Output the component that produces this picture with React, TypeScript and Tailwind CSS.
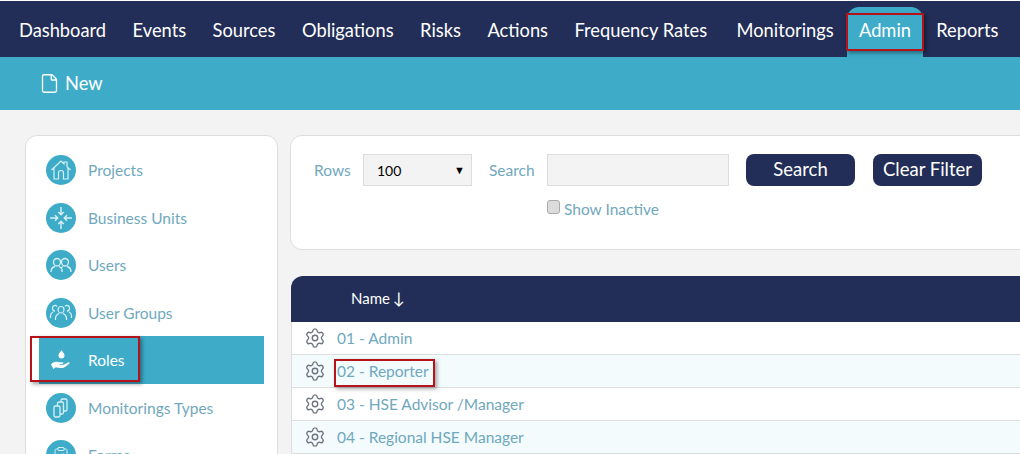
import { File, Settings, ClipboardList } from 'lucide-react';

const navItems = ['Dashboard', 'Events', 'Sources', 'Obligations', 'Risks', 'Actions', 'Frequency Rates', 'Monitorings', 'Admin', 'Reports'];

function HomeIcon() {
  return (
    <svg width="22" height="22" viewBox="0 0 22 22" fill="none" stroke="currentColor" strokeWidth="1.2">
      <path d="M1.500 11 11 2l3 2.800V3h3v4.600L20.500 11M4 9v11h4.500v-6a2.500 2.500 0 0 1 5 0v6H18V9" />
    </svg>
  );
}

function UnitsIcon() {
  return (
    <svg width="24" height="24" viewBox="0 0 22 22" fill="none" stroke="currentColor" strokeWidth="1.3">
      <path d="M11 1v7M8.500 5.500 11 8l2.500-2.500M11 21v-7M8.500 16.500 11 14l2.500 2.500M1 11h7M5.500 8.500 8 11l-2.500 2.500M21 11h-7M16.500 8.500 14 11l2.500 2.500" />
    </svg>
  );
}

function UsersIcon() {
  return (
    <svg width="22" height="22" viewBox="0 0 22 22" fill="none" stroke="currentColor" strokeWidth="1.3">
      <path d="M3.500 8a3.500 3.500 0 0 1 7 0c0 2-1.500 4-3.500 4S3.500 10 3.500 8zM1 18c0-3 2-5 4-5.500M9 12.500c1.500.5 2.500 1.500 3 3v2.500" />
      <path d="M11.500 8a3.500 3.500 0 0 1 7 0c0 2-1.500 4-3.500 4s-3.500-2-3.500-4zM13 12.500c-1 .3-1.500.8-2 1.500M17 12.500c2 .5 4 2.500 4 5.500" />
    </svg>
  );
}

function GroupIcon() {
  return (
    <svg width="24" height="24" viewBox="0 0 24 24" fill="none" stroke="currentColor" strokeWidth="1.2">
      <path d="M9 8.500a3 3 0 0 1 6 0c0 1.800-1.300 3.500-3 3.500s-3-1.700-3-3.500zM6.500 19v-2c0-2 1.500-3.500 3.500-4.500M17.500 19v-2c0-2-1.500-3.500-3.500-4.500" />
      <path d="M8 5.500A2.500 2.500 0 0 0 3.500 7c0 1.500 1 3 2.500 3.200M4 11c-1.500.7-2.500 2-2.500 3.800V17M16 5.500A2.500 2.500 0 0 1 20.500 7c0 1.500-1 3-2.500 3.200M20 11c1.500.7 2.500 2 2.500 3.800V17" />
    </svg>
  );
}

function RolesIcon() {
  return (
    <svg width="22" height="22" viewBox="0 0 22 22" fill="currentColor">
      <path d="M11.500 1c1.600 2.400 3 3.800 3 5.500a3 3 0 0 1-6 0C8.500 4.800 10 3.400 11.500 1z" />
      <path d="M1 15.500c1.500-2 3.500-3 5.500-2.800l3 .6h3c1 0 1.200 1.500 0 1.700l-3 .3.200.6 3.800-.2 5-2.500c1-.3 1.500.8.700 1.500-2 1.800-4 3.500-6.500 4.200-2.500.6-5-.3-7-.7L3.500 20z" />
    </svg>
  );
}

function TypesIcon() {
  return (
    <svg width="22" height="22" viewBox="0 0 22 22" fill="none" stroke="currentColor" strokeWidth="1.3" strokeLinejoin="round">
      <rect x="4" y="9" width="6" height="11" rx="1.500" />
      <path d="M7.500 9V6.500A1.500 1.500 0 0 1 9 5h3a1.500 1.500 0 0 1 1.500 1.500v9a1.500 1.500 0 0 1-1.500 1.500h-2" />
      <path d="M11 5V3.500A1.500 1.500 0 0 1 12.500 2h3A1.500 1.500 0 0 1 17 3.500v9a1.500 1.500 0 0 1-1.500 1.500h-2" />
    </svg>
  );
}

const sideItems = [
  { label: 'Projects', icon: <HomeIcon /> },
  { label: 'Business Units', icon: <UnitsIcon /> },
  { label: 'Users', icon: <UsersIcon /> },
  { label: 'User Groups', icon: <GroupIcon /> },
  { label: 'Roles', icon: <RolesIcon />, active: true },
  { label: 'Monitorings Types', icon: <TypesIcon /> },
  { label: 'Forms', icon: <ClipboardList size={18} strokeWidth={1.3} /> },
];

const rows = ['01 - Admin', '02 - Reporter', '03 - HSE Advisor /Manager', '04 - Regional HSE Manager'];

export default function App() {
  return (
    <div className="relative w-[1020px] h-[454px] overflow-hidden bg-[#f4f3f4] font-['Lato',sans-serif]">
      <div className="h-px bg-white" />
      <nav className="h-[56px] bg-[#222e57] flex items-end pl-[5.750px] whitespace-nowrap text-[18.300px] text-white">
        {navItems.map((item) =>
          item === 'Admin' ? (
            <div key={item} className="relative h-[50px] w-[76px] flex items-center justify-center rounded-t-xl bg-[#3eacc9] pb-[2px]">
              {item}
              <div className="absolute left-[-1px] right-[-1px] top-[6px] h-[38px] border-2 border-[#b5121b] shadow-[2px_2px_4px_rgba(0,0,0,0.4)]" />
            </div>
          ) : (
            <a key={item} className={`h-[56px] px-[13.250px] flex items-center pt-[4px] ${item === 'Frequency Rates' ? 'mr-[3px]' : ''}`}>
              {item}
            </a>
          )
        )}
      </nav>
      <div className="h-[53px] bg-[#3eacc9] flex items-center pl-[39px] gap-[5px] text-white text-[18.300px]">
        <File size={21} strokeWidth={1.5} />
        New
      </div>

      <div className="flex gap-3 pl-[25px] pt-[25px]">
        <aside className="w-[253px] h-[400px] shrink-0 bg-white border border-[#ddd] rounded-xl pt-[10px] px-[13px]">
          {sideItems.map((item, i) => (
            <div key={item.label} className={`relative flex items-center gap-[12px] pl-[7px] text-[15.500px] ${i % 2 ? 'h-[47px]' : 'h-[48px]'} ${item.active ? 'bg-[#3eacc9] text-white' : 'text-[#6fa8bd]'}`}>
              <span className={`w-[30px] h-[30px] rounded-full flex items-center justify-center ${item.active ? 'text-white' : 'bg-[#3eacc9] text-[#d8f1f7]'}`}>
                {item.icon}
              </span>
              <span className="pt-[2px]">{item.label}</span>
              {item.active && (
                <div className="absolute left-[-9px] top-0 w-[110px] h-[46px] border-2 border-[#b5121b] shadow-[2px_2px_4px_rgba(0,0,0,0.4)]" />
              )}
            </div>
          ))}
        </aside>

        <div className="w-[760px] shrink-0">
          <div className="h-[115px] bg-white border border-[#ddd] rounded-xl pl-[23px] pt-[18px] text-[15.500px] text-[#6fa8bd]">
            <div className="flex items-center h-[32px]">
              <span className="w-[49px] pt-[2px]">Rows</span>
              <div className="w-[109px] h-[32px] bg-[#f4f3f4] border border-[#ddd] flex items-center justify-between pl-[13px] pr-[6px] text-black text-[14px]">
                100
                <span className="text-[11px]">▼</span>
              </div>
              <span className="ml-[17px] w-[58px] pt-[2px]">Search</span>
              <div className="w-[182px] h-[32px] bg-[#f4f3f4] border border-[#ddd]" />
              <button className="ml-[17px] w-[109px] h-[32px] rounded-lg bg-[#222e57] text-white text-[18.500px]">Search</button>
              <button className="ml-[18px] w-[109px] h-[32px] rounded-lg bg-[#222e57] text-white text-[18.500px]">Clear Filter</button>
            </div>
            <div className="flex items-center gap-[4px] ml-[233px] mt-[12px]">
              <span className="w-[13px] h-[14px] rounded-[3px] bg-[#dcdcdc] border border-[#aaa] mb-[5px]" />
              Show Inactive
            </div>
          </div>

          <div className="mt-[26px] ml-px">
            <div className="h-[46px] bg-[#222e57] rounded-t-xl flex items-center pl-[60px] pb-[2px] gap-[3px] text-white text-[15px]">
              Name <span className="text-[16px] leading-none">↓</span>
            </div>
            {rows.map((row, i) => (
              <div key={row} className={`h-[33px] flex items-center pl-[12px] gap-[11px] border-b border-l border-[#ddd] text-[15.500px] text-[#6fa8bd] ${i % 2 ? 'bg-[#f3fbfd]' : 'bg-white'}`}>
                <Settings size={22} strokeWidth={1.5} className="text-[#6b7280]" />
                <span className="relative pt-[2px]">
                  {row}
                  {i === 1 && (
                    <span className="absolute left-[-3px] right-[-6px] top-[1px] bottom-[-3px] border-2 border-[#b5121b] shadow-[2px_2px_4px_rgba(0,0,0,0.35)]" />
                  )}
                </span>
              </div>
            ))}
          </div>
        </div>
      </div>
    </div>
  );
}
